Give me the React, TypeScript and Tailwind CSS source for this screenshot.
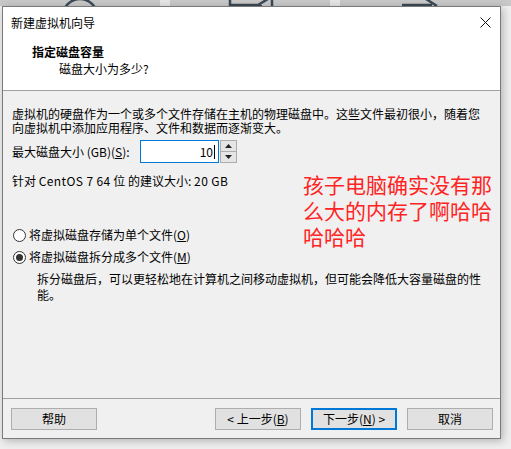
import React from "react";

const font = { fontFamily: '"Noto Sans CJK SC", "Noto Sans", sans-serif' };

function TopStrip() {
  // bits of the desktop peeking out above the dialog
  return (
    <div className="h-[6px] w-full overflow-hidden">
      <svg width="511" height="6" viewBox="0 0 511 6">
        <rect x="0" y="0" width="511" height="6" fill="#c8c8c8" />
        <rect x="160" y="0" width="10" height="6" fill="#e6e6e6" />
        <rect x="330" y="0" width="10" height="6" fill="#e6e6e6" />
        <circle cx="80" cy="16" r="17" fill="none" stroke="#3c4954" strokeWidth="2.5" />
        <path d="M230 0 V6 M231 5 H262 M258 5 L268 -1 M272 0 V6" fill="none" stroke="#3c4954" strokeWidth="2.5" />
        <path d="M402 5 H432 M426 -1 L437 6" fill="none" stroke="#3c4954" strokeWidth="2.5" />
      </svg>
    </div>
  );
}

function Radio({ checked }: { checked?: boolean }) {
  return (
    <span className="w-[13px] h-[13px] rounded-full border border-[#333] bg-white flex items-center justify-center shrink-0">
      {checked && <span className="w-[7px] h-[7px] rounded-full bg-[#333]" />}
    </span>
  );
}

function WinButton({
  children,
  primary,
}: {
  children: React.ReactNode;
  primary?: boolean;
}) {
  return (
    <button
      className={
        primary
          ? "w-[86px] h-[22px] bg-[#e1e1e1] border-2 border-[#0078d7] text-[12px] leading-none text-black flex items-center justify-center"
          : "w-[86px] h-[22px] bg-[#e1e1e1] border border-[#adadad] text-[12px] leading-none text-black flex items-center justify-center"
      }
    >
      {children}
    </button>
  );
}

export default function App() {
  return (
    <div className="w-[511px] h-[449px] bg-[#efefef] overflow-hidden" style={font}>
      <TopStrip />

      <div className="ml-[2px] w-[499px] h-[433px] border border-[#7a7a7a] bg-[#f0f0f0] flex flex-col shadow-[2px_2px_8px_rgba(0,0,0,0.25)] relative">
        {/* Title bar */}
        <div className="h-[30px] bg-white flex items-center justify-between pl-[8px] pr-[9px] pt-px">
          <span className="text-[12px] text-black">新建虚拟机向导</span>
          <svg width="11" height="11" viewBox="0 0 11 11">
            <path d="M0.5 0.5 L10.5 10.5 M10.5 0.5 L0.5 10.5" stroke="#111" strokeWidth="1" />
          </svg>
        </div>

        {/* Wizard header */}
        <div className="h-[53px] bg-white pt-[7px]">
          <div className="pl-[29px] text-[12px] leading-[16px] font-bold text-black">
            指定磁盘容量
          </div>
          <div className="pl-[56px] mt-[1px] text-[12px] leading-[16px] text-black">
            磁盘大小为多少?
          </div>
        </div>
        <div className="h-px bg-[#a0a0a0]" />

        {/* Body */}
        <div className="flex-1 relative pl-[9px] pt-[16px] text-[12px] text-black">
          <p className="leading-[14px]">
            虚拟机的硬盘作为一个或多个文件存储在主机的物理磁盘中。这些文件最初很小，随着您
            <br />
            向虚拟机中添加应用程序、文件和数据而逐渐变大。
          </p>

          <div className="flex items-center mt-[5px] h-[23px]">
            <span className="w-[128px] leading-[16px]">
              最大磁盘大小 (GB)(<span className="underline">S</span>):
            </span>
            <div className="w-[79px] h-[23px] border border-[#0078d7] bg-white flex items-center justify-end pr-[3px]">
              <span className="leading-none">10</span>
              <span className="w-px h-[14px] bg-black ml-px" />
            </div>
            <div className="w-[17px] h-[23px] flex flex-col border border-[#adadad] bg-[#f0f0f0] ml-px">
              <div className="flex-1 flex items-center justify-center border-b border-[#adadad] bg-[#e5e5e5]">
                <svg width="7" height="4" viewBox="0 0 7 4">
                  <path d="M0 4 L3.5 0 L7 4 Z" fill="#222" />
                </svg>
              </div>
              <div className="flex-1 flex items-center justify-center bg-[#e5e5e5]">
                <svg width="7" height="4" viewBox="0 0 7 4">
                  <path d="M0 0 L3.5 4 L7 0 Z" fill="#222" />
                </svg>
              </div>
            </div>
          </div>

          <p className="mt-[11px] leading-[14px]">
            针对 <span className="tracking-[0.4px]">CentOS 7 64</span> 位 的建议大小:{" "}
            <span className="tracking-[0.4px]">20 GB</span>
          </p>

          <div className="mt-[39px] flex flex-col gap-[6px] pl-[1px]">
            <label className="flex items-center h-[16px] gap-[3px]">
              <Radio />
              <span>
                将虚拟磁盘存储为单个文件(<span className="underline">O</span>)
              </span>
            </label>
            <label className="flex items-center h-[16px] gap-[3px]">
              <Radio checked />
              <span>
                将虚拟磁盘拆分成多个文件(<span className="underline">M</span>)
              </span>
            </label>
          </div>

          <p className="mt-[6px] pl-[25px] leading-[16px]">
            拆分磁盘后，可以更轻松地在计算机之间移动虚拟机，但可能会降低大容量磁盘的性
            <br />
            能。
          </p>

          {/* red annotation written over the screenshot */}
          <div className="absolute left-[300px] top-[80px] text-[21px] leading-[26px] text-[#ff2424]">
            孩子电脑确实没有那
            <br />
            么大的内存了啊哈哈
            <br />
            哈哈哈
          </div>
        </div>

        <div className="h-px bg-[#a0a0a0]" />

        {/* Footer buttons */}
        <div className="h-[39px] pt-[9px] pl-[8px] pr-[7px] flex">
          <WinButton>帮助</WinButton>
          <div className="flex-1" />
          <div className="flex gap-[10px]">
            <WinButton>
              &lt; 上一步(<span className="underline">B</span>)
            </WinButton>
            <WinButton primary>
              下一步(<span className="underline">N</span>) &gt;
            </WinButton>
            <WinButton>取消</WinButton>
          </div>
        </div>
      </div>
    </div>
  );
}
